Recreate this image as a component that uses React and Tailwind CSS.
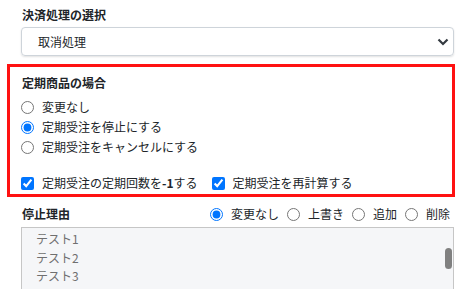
import React from 'react';

const font = { fontFamily: '"Noto Sans CJK JP", "Noto Sans", sans-serif' };

// ラジオボタン＋ラベル
const Radio = ({ name, label, checked }) => (
    <label className="flex items-center gap-[8px]">
        <input type="radio" name={name} defaultChecked={checked} className="m-0 w-[13px] h-[13px] accent-[#0075ff]" />
        <span>{label}</span>
    </label>
);

const Check = ({ children }) => (
    <label className="flex items-center gap-[8px]">
        <input type="checkbox" defaultChecked className="m-0 w-[13px] h-[13px] accent-[#0075ff]" />
        <span>{children}</span>
    </label>
);

export default function App() {
    return (
        <div style={font} className="w-[467px] h-[289px] overflow-hidden bg-white text-[12px] text-[#212529] pl-[21px] pr-[13px] pt-[6px]">
            {/* 決済処理の選択 */}
            <h3 className="text-[12px] font-bold leading-[18px] pl-[1px]">決済処理の選択</h3>
            <div className="mt-[3px] h-[29px] flex items-center justify-between border border-[#ced4da] rounded-[4px] shadow-[0_1px_2px_rgba(0,0,0,0.12)] pl-[16px] pr-[3px]">
                <span>取消処理</span>
                <svg width="12" height="8" viewBox="0 0 12 8" className="mr-[1px]">
                    <polyline points="1.5,1.5 6,6 10.5,1.5" fill="none" stroke="#343a40" strokeWidth="2.2" />
                </svg>
            </div>

            {/* 定期商品の場合 */}
            <div className="mt-[8px] ml-[-14px] mr-[-1px] border-[3px] border-[#ff1111] pl-[11px] pt-[7px] pb-[1px]">
                <h3 className="font-bold leading-[18px] pl-[1px]">定期商品の場合</h3>
                <div className="mt-[5px] flex flex-col">
                    <div className="h-[20px] flex items-center"><Radio name="teiki" label="変更なし" /></div>
                    <div className="h-[20px] flex items-center"><Radio name="teiki" label="定期受注を停止にする" checked /></div>
                    <div className="h-[20px] flex items-center"><Radio name="teiki" label="定期受注をキャンセルにする" /></div>
                </div>
                <div className="mt-[16px] h-[20px] flex items-center gap-[14px]">
                    <Check>定期受注の定期回数を<b>-1</b>する</Check>
                    <Check>定期受注を再計算する</Check>
                </div>
            </div>

            {/* 停止理由 */}
            <div className="mt-[7px] h-[20px] flex items-center justify-between">
                <h3 className="font-bold pl-[1px]">停止理由</h3>
                <div className="flex items-center gap-[8px] pr-[4px]">
                    <Radio name="reason" label="変更なし" checked />
                    <Radio name="reason" label="上書き" />
                    <Radio name="reason" label="追加" />
                    <Radio name="reason" label="削除" />
                </div>
            </div>
            <div className="relative mt-[3px] h-[80px] border border-[#c6c6c6] bg-[#f5f6f8] text-[#6f6f6f] pl-[14px] pt-[2px] leading-[18.5px]">
                <div>テスト1</div>
                <div>テスト2</div>
                <div>テスト3</div>
                <div>テスト4</div>
                <div className="absolute right-[1px] top-[20px] w-[7px] h-[21px] rounded-full bg-[#808080]" />
            </div>
        </div>
    );
}
